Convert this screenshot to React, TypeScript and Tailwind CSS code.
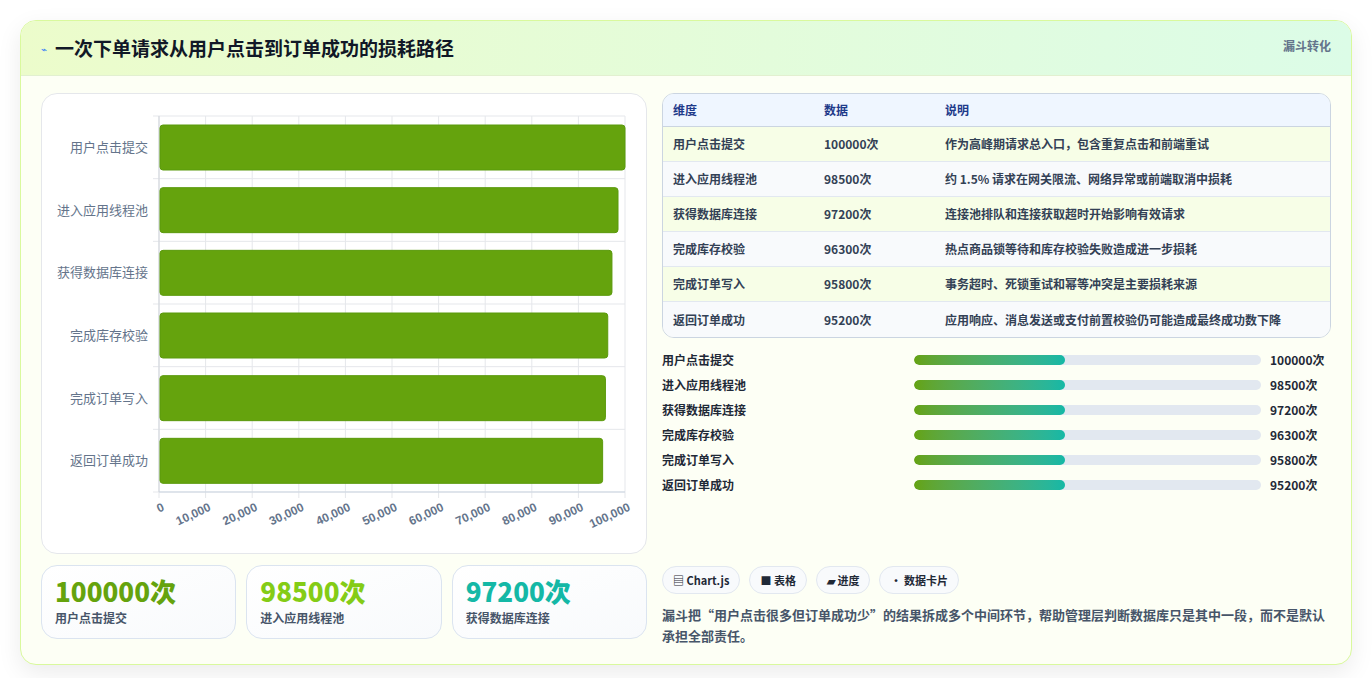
const rows = [
  { name: "用户点击提交", value: 100000, note: "作为高峰期请求总入口，包含重复点击和前端重试" },
  { name: "进入应用线程池", value: 98500, note: "约 1.5% 请求在网关限流、网络异常或前端取消中损耗" },
  { name: "获得数据库连接", value: 97200, note: "连接池排队和连接获取超时开始影响有效请求" },
  { name: "完成库存校验", value: 96300, note: "热点商品锁等待和库存校验失败造成进一步损耗" },
  { name: "完成订单写入", value: 95800, note: "事务超时、死锁重试和幂等冲突是主要损耗来源" },
  { name: "返回订单成功", value: 95200, note: "应用响应、消息发送或支付前置校验仍可能造成最终成功数下降" },
];

const font = { fontFamily: '"Noto Sans CJK SC", "Noto Sans", sans-serif' };

const BarChart = () => {
  const x0 = 117, x1 = 583, y0 = 22, y1 = 398;
  const rh = (y1 - y0) / 6;
  const ticks = Array.from({ length: 11 }, (_, i) => i * 10000);
  return (
    <svg width="606" height="460" className="block">
      {ticks.map((t, i) => {
        const x = x0 + ((x1 - x0) * i) / 10;
        return <line key={t} x1={x} x2={x} y1={y0} y2={y1 + 6} stroke="#e5e7eb" strokeWidth="1" />;
      })}
      {Array.from({ length: 7 }, (_, i) => (
        <line key={i} x1={x0 - 6} x2={x1} y1={y0 + rh * i} y2={y0 + rh * i} stroke="#e5e7eb" />
      ))}
      <line x1={x0} x2={x0} y1={y0} y2={y1} stroke="#d1d5db" />
      <line x1={x0} x2={x1} y1={y1} y2={y1} stroke="#cbd5e1" />
      {rows.map((r, i) => {
        const y = y0 + rh * i + 9;
        const w = ((x1 - x0) * r.value) / 100000;
        return (
          <g key={r.name}>
            <rect x={x0 + 1} y={y} width={w - 1} height={45} rx="3" fill="#65a30d" stroke="#5b9a0c" />
            <text x={x0 - 11} y={y + 27} textAnchor="end" fontSize="13" fill="#64748b" style={font}>{r.name}</text>
          </g>
        );
      })}
      {ticks.map((t, i) => {
        const x = x0 + ((x1 - x0) * i) / 10;
        return (
          <text key={t} x={x + 6} y={y1 + 18} textAnchor="end" fontSize="12" fontWeight="700" fill="#64748b"
            transform={`rotate(-25 ${x + 6} ${y1 + 18})`} style={{ fontFamily: '"Liberation Sans", sans-serif' }}>
            {t.toLocaleString("en-US")}
          </text>
        );
      })}
    </svg>
  );
};

const stats = [
  { v: "100000次", l: "用户点击提交", c: "text-[#65a30d]" },
  { v: "98500次", l: "进入应用线程池", c: "text-[#84cc16]" },
  { v: "97200次", l: "获得数据库连接", c: "text-[#14b8a6]" },
];

const tags = ["▤ Chart.js", "■ 表格", "▰ 进度", "• 数据卡片"];

export default function App() {
  return (
    <div className="min-h-[678px] bg-white p-5" style={font}>
      <div className="rounded-2xl border border-[#d9f99d] bg-[#fdfff5] shadow-[0_8px_24px_rgba(0,0,0,0.08)] overflow-hidden">
        <div className="h-[55px] flex items-center justify-between px-5 bg-gradient-to-r from-[#ecfccb] to-[#dcfce7] border-b border-[#e2f0d0]">
          <div className="flex items-center gap-2">
            <span className="text-[10px] text-[#3b82f6]">⌁</span>
            <h1 className="text-[19px] font-bold text-[#111827]">一次下单请求从用户点击到订单成功的损耗路径</h1>
          </div>
          <span className="self-start mt-4 text-[12px] font-semibold text-[#64748b]">漏斗转化</span>
        </div>
        <div className="flex gap-[15px] px-5 pt-[17px] pb-[18px]">
          <div className="w-[606px] flex flex-col gap-[11px]">
            <div className="rounded-2xl border border-[#e5e7eb] bg-white h-[461px]">
              <BarChart />
            </div>
            <div className="grid grid-cols-3 gap-[10px]">
              {stats.map((s) => (
                <div key={s.l} className="h-[74px] rounded-2xl border border-[#dbe4f0] bg-gradient-to-br from-white to-[#f8fafc] px-[13px] pt-[9px]">
                  <div className={`text-[26px] font-extrabold leading-[32px] ${s.c}`}>{s.v}</div>
                  <div className="text-[12px] font-semibold text-[#475569] mt-[2px]">{s.l}</div>
                </div>
              ))}
            </div>
          </div>
          <div className="flex-1 flex flex-col">
            <div className="rounded-xl border border-[#cbd5e1] overflow-hidden text-[12px] font-semibold">
              <div className="flex h-[33px] items-center bg-[#eff6ff] text-[#1e3a8a] border-b border-[#cbd5e1]">
                <div className="w-[161px] pl-[10px]">维度</div>
                <div className="w-[121px]">数据</div>
                <div>说明</div>
              </div>
              {rows.map((r, i) => (
                <div key={r.name} className={`flex h-[35px] items-center text-[#334155] ${i < 5 ? "border-b border-[#e2e8f0]" : ""} ${i % 2 ? "bg-[#f8fafc]" : "bg-[#f7fee7]"}`}>
                  <div className="w-[161px] pl-[10px]">{r.name}</div>
                  <div className="w-[121px]">{r.value}次</div>
                  <div>{r.note}</div>
                </div>
              ))}
            </div>
            <div className="mt-[9px] flex flex-col">
              {rows.map((r) => (
                <div key={r.name} className="flex items-center h-[25px] text-[12px] font-semibold text-[#1f2937]">
                  <div className="w-[252px]">{r.name}</div>
                  <div className="w-[347px] h-[10px] rounded-full bg-[#e2e8f0] overflow-hidden">
                    <div className="h-full w-[151px] rounded-full bg-gradient-to-r from-[#65a30d] to-[#14b8a6]" />
                  </div>
                  <div className="ml-[9px]">{r.value}次</div>
                </div>
              ))}
            </div>
            <div className="mt-[69px] flex gap-[9px]">
              {tags.map((t) => (
                <span key={t} className="h-[28px] px-[10px] flex items-center rounded-full border border-[#e2e8f0] bg-[#f8fafc] text-[11px] font-semibold text-[#1f2937]">{t}</span>
              ))}
            </div>
            <p className="mt-[10px] text-[13px] font-semibold leading-[21px] text-[#475569]">
              漏斗把“用户点击很多但订单成功少”的结果拆成多个中间环节，帮助管理层判断数据库只是其中一段，而不是默认承担全部责任。
            </p>
          </div>
        </div>
      </div>
    </div>
  );
}
